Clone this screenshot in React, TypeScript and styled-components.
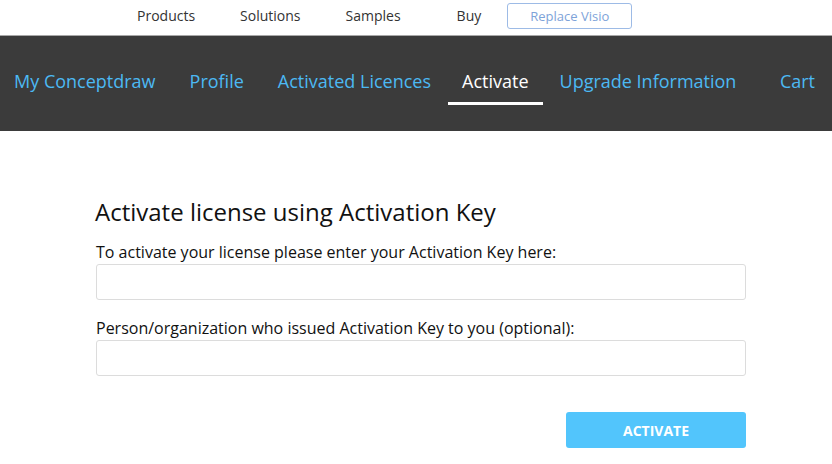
import styled, { createGlobalStyle } from "styled-components";

const GlobalStyle = createGlobalStyle`
  html, body {
    margin: 0;
    padding: 0;
    background: #ffffff;
    font-family: "Open Sans", "Liberation Sans", sans-serif;
    color: #111;
  }
`;

const TopBar = styled.div`
  height: 36px;
  box-sizing: border-box;
  display: flex;
  align-items: center;
  padding: 0 0 4px 137px;
  border-bottom: 1px solid #a8a8a8;
`;

const TopLink = styled.a<{ $gap: number }>`
  font-size: 14px;
  color: #333;
  text-decoration: none;
  margin-right: ${({ $gap }) => $gap}px;
`;

const VisioButton = styled.a`
  width: 125px;
  height: 26px;
  box-sizing: border-box;
  display: flex;
  align-items: center;
  justify-content: center;
  border: 1px solid #9dbbe6;
  border-radius: 3px;
  font-size: 13px;
  color: #7ea3d9;
  text-decoration: none;
`;

const MainNav = styled.nav`
  height: 95px;
  box-sizing: border-box;
  background: #3b3b3b;
  display: flex;
  align-items: center;
  padding: 0 3px 6px 0;
`;

const NavItem = styled.a<{ $active?: boolean; $push?: boolean; $gap?: number }>`
  position: relative;
  padding: 0 14px;
  margin-right: ${({ $gap = 6 }) => $gap}px;
  margin-left: ${({ $push }) => ($push ? "auto" : "0")};
  font-size: 18px;
  line-height: 24px;
  color: ${({ $active }) => ($active ? "#ffffff" : "#4cb9f3")};
  text-decoration: none;
  white-space: nowrap;

  &::after {
    content: "";
    display: ${({ $active }) => ($active ? "block" : "none")};
    position: absolute;
    left: 0;
    right: 0;
    bottom: -12px;
    height: 3px;
    background: #ffffff;
  }
`;

const Content = styled.main`
  width: 650px;
  margin: 0 auto;
  padding: 66px 0 0 10px;
  display: flex;
  flex-direction: column;
`;

const Heading = styled.h1`
  margin: 0 0 15px -1px;
  font-size: 24px;
  font-weight: 400;
  line-height: 30px;
  color: #111;
`;

const Field = styled.div<{ $bottom: number }>`
  display: flex;
  flex-direction: column;
  margin-bottom: ${({ $bottom }) => $bottom}px;
`;

const Label = styled.label`
  font-size: 16px;
  line-height: 20px;
  margin-bottom: 2px;
  color: #111;
`;

const Input = styled.input`
  height: 36px;
  box-sizing: border-box;
  border: 1px solid #dcdcdc;
  border-radius: 3px;
  padding: 0 10px;
  font-family: inherit;
  font-size: 14px;
  outline: none;
`;

const Actions = styled.div`
  display: flex;
  justify-content: flex-end;
`;

const SubmitButton = styled.button`
  width: 180px;
  height: 36px;
  border: none;
  border-radius: 3px;
  background: #52c5fc;
  color: #ffffff;
  font-family: inherit;
  font-size: 14px;
  font-weight: 700;
  cursor: pointer;
`;

const topLinks = [
  { label: "Products", gap: 45 },
  { label: "Solutions", gap: 45 },
  { label: "Samples", gap: 56 },
  { label: "Buy", gap: 26 },
];

const navLinks = [
  { label: "My Conceptdraw", gap: 6 },
  { label: "Profile", gap: 6 },
  { label: "Activated Licences", gap: 3 },
  { label: "Activate", gap: 3 },
  { label: "Upgrade Information", gap: 3 },
];

export default function App() {
  return (
    <>
      <GlobalStyle />
      <TopBar>
        {topLinks.map((l) => (
          <TopLink key={l.label} href="#" $gap={l.gap}>
            {l.label}
          </TopLink>
        ))}
        <VisioButton href="#">Replace Visio</VisioButton>
      </TopBar>
      <MainNav>
        {navLinks.map((l) => (
          <NavItem
            key={l.label}
            href="#"
            $gap={l.gap}
            $active={l.label === "Activate"}
          >
            {l.label}
          </NavItem>
        ))}
        <NavItem href="#" $push $gap={0}>
          Cart
        </NavItem>
      </MainNav>
      <Content>
        <Heading>Activate license using Activation Key</Heading>
        <Field $bottom={18}>
          <Label>To activate your license please enter your Activation Key here:</Label>
          <Input type="text" />
        </Field>
        <Field $bottom={36}>
          <Label>Person/organization who issued Activation Key to you (optional):</Label>
          <Input type="text" />
        </Field>
        <Actions>
          <SubmitButton>ACTIVATE</SubmitButton>
        </Actions>
      </Content>
    </>
  );
}
